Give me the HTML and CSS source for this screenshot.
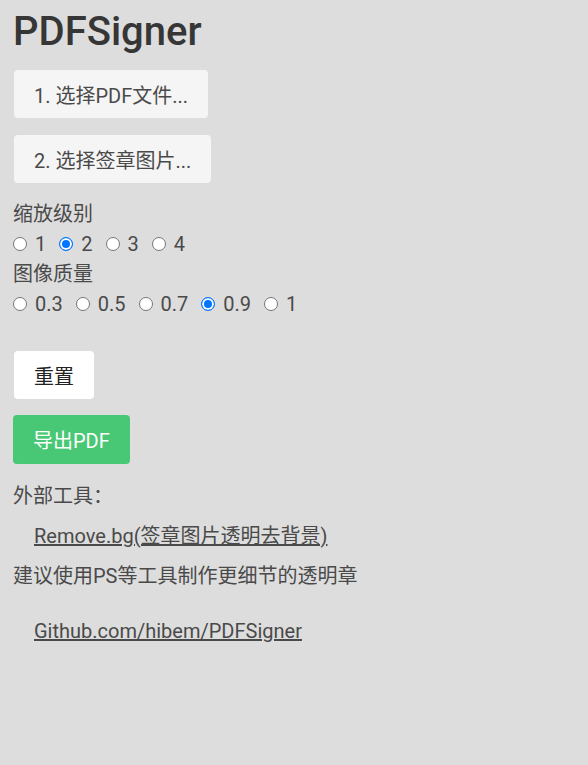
FILE: index.html
```html
<!DOCTYPE html>
<html>
<head>
    <title>PDFSigner</title>
    <meta charset="UTF-8">
    <link rel="stylesheet" href="styles.css">
</head>
<body>
    <h1 class="title">PDFSigner</h1>

    <div class="file-buttons">
        <button class="button is-light">1. 选择PDF文件...</button>
        <button class="button is-light">2. 选择签章图片...</button>
    </div>

    <div class="field">
        <div class="field-label">缩放级别</div>
        <div class="radios">
            <label class="radio"><input type="radio" name="scale">1</label>
            <label class="radio"><input type="radio" name="scale" checked>2</label>
            <label class="radio"><input type="radio" name="scale">3</label>
            <label class="radio"><input type="radio" name="scale">4</label>
        </div>
    </div>

    <div class="field">
        <div class="field-label">图像质量</div>
        <div class="radios">
            <label class="radio"><input type="radio" name="quality">0.3</label>
            <label class="radio"><input type="radio" name="quality">0.5</label>
            <label class="radio"><input type="radio" name="quality">0.7</label>
            <label class="radio"><input type="radio" name="quality" checked>0.9</label>
            <label class="radio"><input type="radio" name="quality">1</label>
        </div>
    </div>

    <div class="actions">
        <button class="button is-white">重置</button>
        <button class="button is-success">导出PDF</button>
    </div>

    <div class="tools">
        <p>外部工具：</p>
        <p class="link-line"><a href="#">Remove.bg(签章图片透明去背景)</a></p>
        <p>建议使用PS等工具制作更细节的透明章</p>
        <p class="link-line github"><a href="#">Github.com/hibem/PDFSigner</a></p>
    </div>
</body>
</html>
```

FILE: styles.css
```css
body {
    font-family: Roboto, "Noto Sans CJK SC", sans-serif;
    font-size: 20px;
    line-height: 30px;
    color: #4a4a4a;
    background-color: #dddddd;
    margin: 0;
    padding: 9px 13px 0;
}
.title {
    font-size: 40px;
    font-weight: 500;
    line-height: 45px;
    color: #363636;
    margin: 0 0 16px;
}
.button {
    display: flex;
    align-items: center;
    height: 48px;
    padding: 0 20px;
    font-family: inherit;
    font-size: 20px;
    border: none;
    border-radius: 4px;
    cursor: pointer;
}
.file-buttons {
    display: flex;
    flex-direction: column;
    align-items: flex-start;
    gap: 17px;
    margin-left: 1px;
}
.is-light {
    background-color: #f5f5f5;
    color: #4a4a4a;
}
.is-white {
    background-color: #ffffff;
    color: #222222;
    margin-left: 1px;
}
.is-success {
    background-color: #48c774;
    color: #ffffff;
    height: 49px;
}
.file-buttons + .field {
    margin-top: 16px;
}
.radios {
    display: flex;
    gap: 13px;
}
.radio {
    display: flex;
    align-items: center;
    cursor: pointer;
}
.radio input {
    appearance: none;
    box-sizing: border-box;
    width: 14px;
    height: 14px;
    margin: 0 8px 0 0;
    border: 1px solid #767676;
    border-radius: 50%;
    background-color: #ffffff;
}
.radio input:checked {
    border-color: #0075ff;
    background-color: #0075ff;
    box-shadow: inset 0 0 0 2px #ffffff;
}
.actions {
    display: flex;
    flex-direction: column;
    align-items: flex-start;
    gap: 16px;
    margin-top: 32px;
}
.tools {
    margin-top: 17px;
}
.tools p {
    margin: 0 0 10px;
}
.link-line {
    padding-left: 21px;
}
.tools a {
    color: #4a4a4a;
}
.github {
    margin-top: 25px !important;
}
```
